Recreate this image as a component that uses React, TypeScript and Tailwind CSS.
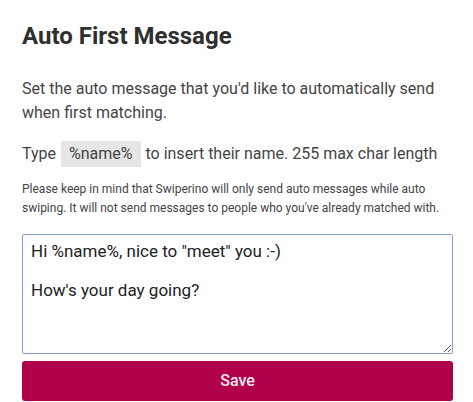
import { useState } from "react";

export default function App() {
  const [msg, setMsg] = useState('Hi %name%, nice to "meet" you :-)\n\nHow\'s your day going?');

  return (
    <div className="w-[473px] h-[402px] bg-white overflow-hidden font-['Roboto',sans-serif]">
      <div className="px-[22px] pt-[22px]">
        <h2 className="text-[24px] leading-[28px] font-bold text-[#2f2f2f]">Auto First Message</h2>

        <p className="mt-[27px] text-[16px] leading-[24px] text-[#444]">
          Set the auto message that you'd like to automatically send when first matching.
        </p>

        <p className="mt-[16px] text-[16px] leading-[26px] text-[#444] whitespace-nowrap">
          Type <span className="inline-block bg-[#e6e6e6] px-[8px] mx-[1px]">%name%</span> to insert their name. 255 max char length
        </p>

        <p className="mt-[13px] text-[12px] leading-[19px] text-[#444]">
          Please keep in mind that Swiperino will only send auto messages while auto swiping. It will not send messages to people who you've already matched with.
        </p>

        <textarea
          value={msg}
          onChange={(e) => setMsg(e.target.value)}
          className="mt-[16px] block w-[431px] h-[120px] border-[1.5px] border-[#7f9fc4] rounded-[2px] px-[8px] pt-[7px] pb-[5px] text-[17px] leading-[19.5px] text-[#222] outline-none"
        />

        <button className="mt-[7px] w-[431px] h-[40px] rounded-[3px] bg-[#b0004a] text-[#fbe9f0] text-[16px] font-medium">
          Save
        </button>
      </div>
    </div>
  );
}
